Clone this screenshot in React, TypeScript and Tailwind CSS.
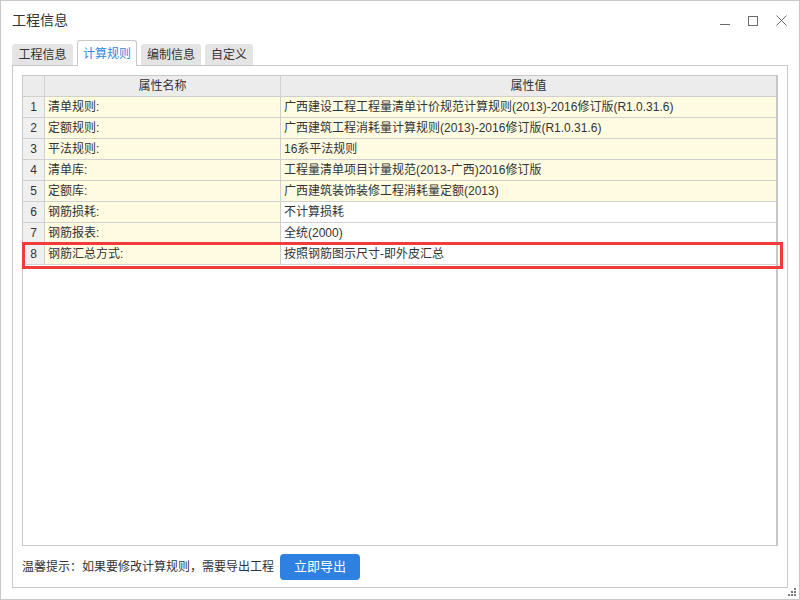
const rows = [
  { name: '清单规则:', value: '广西建设工程工程量清单计价规范计算规则(2013)-2016修订版(R1.0.31.6)', fill: true },
  { name: '定额规则:', value: '广西建筑工程消耗量计算规则(2013)-2016修订版(R1.0.31.6)', fill: true },
  { name: '平法规则:', value: '16系平法规则', fill: true },
  { name: '清单库:', value: '工程量清单项目计量规范(2013-广西)2016修订版', fill: true },
  { name: '定额库:', value: '广西建筑装饰装修工程消耗量定额(2013)', fill: true },
  { name: '钢筋损耗:', value: '不计算损耗', fill: false },
  { name: '钢筋报表:', value: '全统(2000)', fill: false },
  { name: '钢筋汇总方式:', value: '按照钢筋图示尺寸-即外皮汇总', fill: false },
];

const tabs = [
  { label: '工程信息', w: 'w-[61px]' },
  { label: '计算规则', w: 'w-[60px]', active: true },
  { label: '编制信息', w: 'w-[60px]' },
  { label: '自定义', w: 'w-[48px]' },
];

export default function App() {
  return (
    <div
      className="w-[800px] h-[600px] bg-white border border-[#c8c8c8] flex flex-col text-[12px] text-[#333] relative"
      style={{ fontFamily: '"Liberation Sans", "Noto Sans CJK SC", sans-serif' }}
    >
      {/* title bar */}
      <div className="h-[39px] flex items-center justify-between pl-[11px] pr-[12px]">
        <span className="text-[14px] text-[#333]">工程信息</span>
        <div className="flex items-center gap-[18px] text-[#6a6a6a]">
          <svg width="10" height="10" viewBox="0 0 10 10">
            <path d="M0 8.5h10" stroke="currentColor" strokeWidth="1" />
          </svg>
          <svg width="10" height="10" viewBox="0 0 10 10">
            <rect x="0.5" y="0.5" width="9" height="9" fill="none" stroke="currentColor" strokeWidth="1" />
          </svg>
          <svg width="11" height="11" viewBox="0 0 11 11">
            <path d="M0.5 0.5l10 10M10.5 0.5l-10 10" stroke="currentColor" strokeWidth="1" />
          </svg>
        </div>
      </div>

      {/* tabs */}
      <div className="h-[25px] flex items-end gap-[4px] pl-[11px]">
        {tabs.map((t) =>
          t.active ? (
            <div
              key={t.label}
              className={`${t.w} h-[26px] -mb-px relative z-10 bg-white border border-b-0 border-[#c8c8c8] rounded-t-[3px] flex items-center justify-center text-[#2f86e8]`}
            >
              {t.label}
            </div>
          ) : (
            <div
              key={t.label}
              className={`${t.w} h-[21px] bg-[#e4e4e4] rounded-t-[3px] flex items-center justify-center text-[#333]`}
            >
              {t.label}
            </div>
          )
        )}
      </div>

      {/* panel */}
      <div className="flex-1 mx-[11px] mb-[11px] border border-[#c8c8c8] flex flex-col px-[9px] pt-[9px]">
        <div className="relative h-[471px] border border-[#c8c8c8] border-r-2">
          <div className="grid grid-cols-[22px_236px_1fr]">
            <div className="h-[21px] bg-[#ececec] border-b border-r border-[#d0d0d0]" />
            <div className="h-[21px] bg-[#ececec] border-b border-r border-[#d0d0d0] flex items-center justify-center">
              属性名称
            </div>
            <div className="h-[21px] bg-[#ececec] border-b border-[#d0d0d0] flex items-center justify-center">
              属性值
            </div>
            {rows.map((r, i) => (
              <div key={r.name} className="contents">
                <div className="h-[21px] bg-[#f0f0f0] border-b border-r border-[#d0d0d0] flex items-center justify-center">
                  {i + 1}
                </div>
                <div className="h-[21px] bg-[#fffce2] border-b border-r border-[#d0d0d0] flex items-center pl-[3px]">
                  {r.name}
                </div>
                <div
                  className={`h-[21px] border-b border-[#d0d0d0] flex items-center pl-[3px] ${
                    r.fill ? 'bg-[#fffce2]' : 'bg-white'
                  }`}
                >
                  {r.value}
                </div>
              </div>
            ))}
          </div>
          {/* highlight around row 8 */}
          <div className="absolute left-[-1px] top-[166px] w-[761px] h-[27px] border-[3px] border-[#f23b3b] pointer-events-none" />
        </div>

        {/* footer */}
        <div className="flex-1 flex items-center gap-[6px]">
          <span>温馨提示：如果要修改计算规则，需要导出工程</span>
          <button className="w-[80px] h-[26px] rounded-[4px] bg-[#2e80e1] text-white text-[13px]">
            立即导出
          </button>
        </div>
      </div>

      {/* resize grip */}
      <svg className="absolute right-[3px] bottom-[3px]" width="8" height="8" viewBox="0 0 8 8">
        <g fill="#7a7a7a">
          <rect x="6" y="0" width="2" height="2" />
          <rect x="3" y="3" width="2" height="2" />
          <rect x="6" y="3" width="2" height="2" />
          <rect x="0" y="6" width="2" height="2" />
          <rect x="3" y="6" width="2" height="2" />
          <rect x="6" y="6" width="2" height="2" />
        </g>
      </svg>
    </div>
  );
}
